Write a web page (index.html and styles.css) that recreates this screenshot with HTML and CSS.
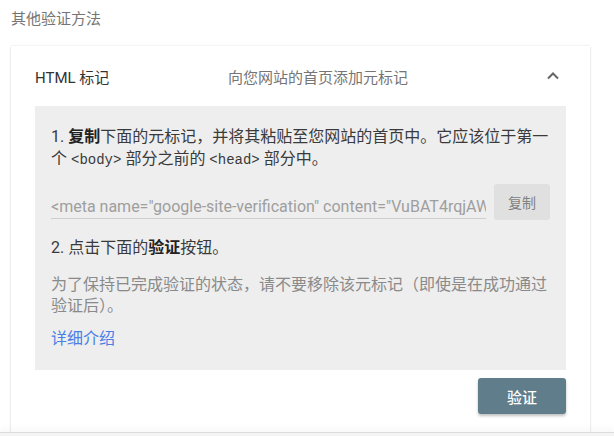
FILE: index.html
```html
<!DOCTYPE html>
<html lang="zh-CN">
<head>
<meta charset="utf-8">
<link rel="stylesheet" href="styles.css">
</head>
<body>
<div class="page">
  <div class="title">其他验证方法</div>
  <div class="card">
    <div class="card-head">
      <div class="head-name">HTML 标记</div>
      <div class="head-desc">向您网站的首页添加元标记</div>
      <svg class="chev" width="24" height="24" viewBox="0 0 24 24"><path d="M7 14.5 L12 9.5 L17 14.5" fill="none" stroke="#666" stroke-width="2"/></svg>
    </div>
    <div class="panel">
      <p class="step1">1. <b>复制</b>下面的元标记，并将其粘贴至您网站的首页中。它应该位于第一个 <code>&lt;body&gt;</code> 部分之前的 <code>&lt;head&gt;</code> 部分中。</p>
      <div class="meta-row">
        <div class="meta-field">&lt;meta name="google-site-verification" content="VuBAT4rqjAWx9mLq2cT8e3Hk0" /&gt;</div>
        <div class="copy-btn">复制</div>
      </div>
      <p class="step2">2. 点击下面的<b>验证</b>按钮。</p>
      <p class="note">为了保持已完成验证的状态，请不要移除该元标记（即使是在成功通过验证后）。</p>
      <a class="more">详细介绍</a>
    </div>
    <div class="actions">
      <div class="verify-btn">验证</div>
    </div>
  </div>
</div>
<div class="footer-edge"></div>
</body>
</html>
```

FILE: styles.css
```css
html, body {
  margin: 0;
  padding: 0;
  height: 436px;
  overflow: hidden;
  background: #fff;
}
body {
  font-family: Roboto, "Noto Sans CJK SC", sans-serif;
  color: #333;
}
.page {
  padding-left: 11px;
}
.title {
  padding-top: 9px;
  line-height: 20px;
  font-size: 15px;
  color: #757575;
  margin-bottom: 17px;
}
.card {
  width: 579px;
  background: #fff;
  box-shadow: 0 0 2px rgba(0,0,0,0.14), 0 2px 2px rgba(0,0,0,0.08);
  padding: 0 24px 24px;
  box-sizing: border-box;
}
.card-head {
  height: 60px;
  display: flex;
  align-items: center;
}
.head-name {
  width: 193px;
  font-size: 15px;
  color: #333;
}
.head-desc {
  flex: 1;
  font-size: 15px;
  color: #757575;
}
.chev {
  margin-right: 1px;
}
.panel {
  background: #eeeeee;
  padding: 20px 16px 20px;
}
.panel p {
  margin: 0;
}
.step1 {
  font-size: 16px;
  line-height: 22px;
  color: #3a3a3a;
}
.step1 b, .step2 b {
  font-weight: 700;
  color: #222;
}
code {
  font-family: "Liberation Mono", monospace;
  font-size: 14px;
}
.meta-row {
  display: flex;
  gap: 8px;
  margin-top: 13px;
  align-items: flex-start;
}
.meta-field {
  flex: 1;
  min-width: 0;
  white-space: nowrap;
  overflow: hidden;
  padding-top: 12px;
  line-height: 22px;
  font-size: 16px;
  color: #9e9e9e;
  border-bottom: 1px solid #cfcfcf;
}
.copy-btn {
  width: 56px;
  height: 36px;
  border-radius: 3px;
  background: #e0e0e0;
  color: #808080;
  font-size: 14px;
  display: flex;
  align-items: center;
  justify-content: center;
}
.step2 {
  margin-top: 17px !important;
  font-size: 16px;
  line-height: 22px;
  color: #3a3a3a;
}
.note {
  margin-top: 15px !important;
  font-size: 16px;
  line-height: 21px;
  color: #8a8a8a;
}
.more {
  display: block;
  margin-top: 12px;
  font-size: 16px;
  line-height: 22px;
  color: #4a7fe6;
}
.actions {
  display: flex;
  justify-content: flex-end;
  margin-top: 8px;
}
.verify-btn {
  width: 88px;
  height: 36px;
  border-radius: 3px;
  background: #607d8b;
  color: #fff;
  font-size: 15px;
  font-weight: 500;
  display: flex;
  align-items: center;
  justify-content: center;
  box-shadow: 0 2px 3px rgba(0,0,0,0.25);
}
.footer-edge {
  position: fixed;
  left: 0;
  right: 0;
  bottom: 0;
  height: 3px;
  background: #f5f5f5;
  border-top: 1px solid #dcdcdc;
  box-shadow: 0 -3px 6px rgba(0,0,0,0.05);
}
```
